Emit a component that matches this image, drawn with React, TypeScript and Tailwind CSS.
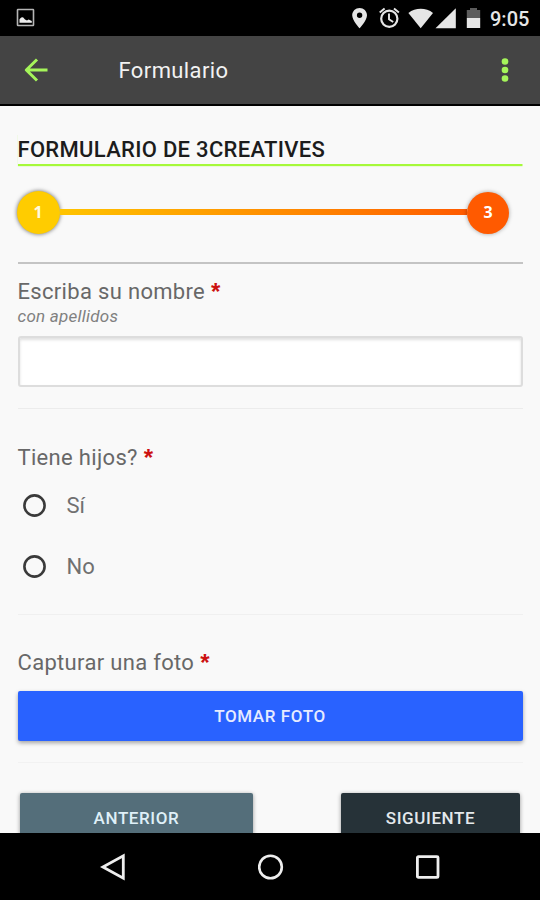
import React from 'react';

interface Option {
  id: string;
  label: string;
}

const childrenOptions: Option[] = [
  { id: 'yes', label: 'Sí' },
  { id: 'no', label: 'No' }
];

const StatusBar: React.FC = () => (
  <div className="flex h-9 shrink-0 items-center justify-between bg-black pl-4 pr-[10.5px]">
    <svg width="20" height="20" viewBox="0 0 20 20">
      <rect x="1.5" y="1.5" width="16" height="16" rx="0.5" fill="none" stroke="#b5b5b5" strokeWidth="1.6" />
      <path d="M3.5 14.8V11.2L5.2 9.6L7 9.2L9 11.4L11 12.4L12.6 11.6L15.8 13V14.8Z" fill="#eee" />
    </svg>
    <div className="flex items-center">
      <svg width="140" height="36" viewBox="350 0 140 36" fill="#e6e6e6">
        <path fillRule="evenodd" d="M359.6 8c-4.1 0-7.4 3.2-7.4 7.3C352.2 20.6 359.6 28.3 359.6 28.3s7.4-7.7 7.4-13C367 11.2 363.7 8 359.6 8zm0 4.5a2.7 2.7 0 1 1 0 5.4a2.7 2.7 0 0 1 0-5.4z" />
        <circle cx="389.3" cy="18.8" r="8.1" fill="none" stroke="#e6e6e6" strokeWidth="2.2" />
        <path d="M389 13.5V19.2L393.2 22M379.7 12.6L384.6 8.5M398.9 12.6L394 8.5" fill="none" stroke="#e6e6e6" strokeWidth="1.9" />
        <path d="M408.4 13C415.5 7.4 426 7.4 433 13L420.7 28.3Z" />
        <path d="M455.8 8.2V28.2H435.5Z" />
        <path d="M466.8 10H470V8H477V10H480.2V18H466.8Z" fill="#5c5c5c" />
        <path d="M466.8 18H480.2V28H466.8Z" />
      </svg>
      <span className="mt-0.5 w-[39.5px] text-[20px] font-medium leading-[34px] text-[#e6e6e6]">9:05</span>
    </div>
  </div>
);

const AppBar: React.FC = () => (
  <header className="flex h-[70px] shrink-0 items-center border-b-2 border-black bg-[#444444] pl-6 pr-[31px]">
    <svg width="25" height="24" viewBox="0 0 25 24" fill="none" stroke="#a5f55a" strokeWidth="3" strokeLinejoin="round" className="-mt-px">
      <path d="M23.5 12H2.5M13 1.5L2.3 12L13 22.5" />
    </svg>
    <h1 className="ml-[69.5px] mt-px flex-1 text-[22px] leading-7 tracking-[0.4px] text-[#f2f2f2]">Formulario</h1>
    <svg width="8" height="24" viewBox="0 0 8 24" fill="#a5f55a" className="-mt-px">
      <circle cx="4" cy="3.5" r="3.3" />
      <circle cx="4" cy="12" r="3.3" />
      <circle cx="4" cy="20.5" r="3.3" />
    </svg>
  </header>
);

const Stepper: React.FC = () => (
  <div className="-ml-[1px] mr-[14px] mt-[25px] flex items-center font-['Open_Sans',sans-serif] text-[16px] font-bold">
    <div className="flex h-[43px] w-[43px] items-center justify-center rounded-full bg-[#ffcc00] pb-0.5 text-[#fffbe0] shadow-[0_0_4px_rgba(0,0,0,0.6)]">
      1
    </div>
    <div className="mb-px h-1.5 flex-1 bg-linear-to-r from-[#ffc400] via-[#ff9000] to-[#ff5a00]" />
    <div className="flex h-[42px] w-[42px] items-center justify-center rounded-full bg-[#ff5a00] pb-px pl-px text-white shadow-[0_0_4px_rgba(0,0,0,0.35)]">
      3
    </div>
  </div>
);

const FieldLabel: React.FC<{ text: string }> = ({ text }) => (
  <div className="flex h-7 items-start pt-px text-[22px] leading-7 tracking-[0.32px] text-[#686868]">
    {text}
    <span className="ml-1.5 font-['Liberation_Sans',sans-serif] text-[24px] font-bold text-[#cc1111]">*</span>
  </div>
);

const BottomNav: React.FC = () => (
  <nav className="flex h-[67px] shrink-0 items-center justify-between bg-black pl-[100px] pr-[99px]">
    <svg width="27" height="28" viewBox="0 0 27 28" fill="none" stroke="#eeeeee" strokeWidth="2.8">
      <path d="M23.3 2.8V25.2L2.9 14Z" />
    </svg>
    <svg width="26" height="26" viewBox="0 0 26 26" fill="none" stroke="#eeeeee" strokeWidth="2.6">
      <circle cx="12.5" cy="13" r="11.3" />
    </svg>
    <svg width="26" height="26" viewBox="0 0 26 26" fill="none" stroke="#eeeeee" strokeWidth="2.8">
      <rect x="2.4" y="2.6" width="20.6" height="20.8" rx="1" />
    </svg>
  </nav>
);

export default function App() {
  return (
    <div className="flex h-[900px] w-[540px] flex-col overflow-hidden bg-[#f9f9f9] font-[Roboto,sans-serif]">
      <StatusBar />
      <AppBar />
      <main className="min-h-0 flex-1 overflow-hidden px-[17.5px]">
        <h2 className="mt-[29px] h-[31px] border-b-2 border-[#a6f93a] pt-px text-[22px] font-medium leading-7 tracking-[0.3px] text-[#1c1c1c] shadow-[0_0_1px_#a6f93a] [clip-path:inset(0_0_-1px_0)]">
          FORMULARIO DE 3CREATIVES
        </h2>
        <Stepper />

        <section className="mt-7 border-b border-[#ececec] border-t-2 border-t-[#c4c4c4] pb-[21px] pt-[13px]">
          <FieldLabel text="Escriba su nombre" />
          <p className="mt-px text-[17px] italic leading-5 tracking-[0.25px] text-[#808080]">con apellidos</p>
          <input
            type="text"
            className="mt-2.5 block h-[51px] w-full rounded-[3px] border-2 border-[#dddddd] bg-white px-3 shadow-[inset_0_2px_3px_rgba(0,0,0,0.12)] outline-none"
          />
        </section>

        <section className="border-b border-[#f0f0f0] pb-[17px] pt-[34px]">
          <FieldLabel text="Tiene hijos?" />
          <div className="mt-1">
            {childrenOptions.map(option => (
              <label key={option.id} className="flex h-[61px] items-center pl-[5px]">
                <svg width="23" height="23" viewBox="0 0 23 23" fill="none" stroke="#3a3a3a" strokeWidth="2.6">
                  <circle cx="11.5" cy="11.5" r="10.1" />
                </svg>
                <span className="ml-[21px] pt-px text-[22px] leading-7 text-[#707070]">{option.label}</span>
              </label>
            ))}
          </div>
        </section>

        <section className="border-b border-[#f2f2f2] pb-[21px] pt-[33px]">
          <FieldLabel text="Capturar una foto" />
          <button className="mt-[15px] block h-[50px] w-full rounded-[2px] bg-[#2962ff] pt-0.5 text-[17px] font-medium tracking-[0.6px] text-[#e6ebff] shadow-[0_2px_4px_rgba(0,0,0,0.35)]">
            TOMAR FOTO
          </button>
        </section>

        <div className="flex justify-between px-[2.5px] pt-[30px]">
          <button className="h-[51px] w-[233px] rounded-[2px] bg-[#546e7a] text-[17px] font-medium tracking-[0.6px] text-[#dff0f8] shadow-[0_1px_4px_rgba(0,0,0,0.4)]">
            ANTERIOR
          </button>
          <button className="h-[51px] w-[179px] rounded-[2px] bg-[#263238] text-[17px] font-medium tracking-[0.6px] text-[#e4e9ec] shadow-[0_1px_4px_rgba(0,0,0,0.4)]">
            SIGUIENTE
          </button>
        </div>
      </main>
      <BottomNav />
    </div>
  );
}
